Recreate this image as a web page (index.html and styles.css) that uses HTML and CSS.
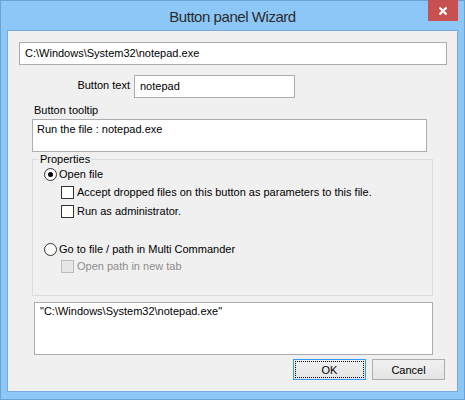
FILE: index.html
```html
<!DOCTYPE html>
<html>
<head>
<meta charset="utf-8">
<link rel="stylesheet" href="styles.css">
</head>
<body>
<div class="window">
  <div class="titlebar">
    <span class="title">Button panel Wizard</span>
    <div class="close">
      <svg width="10" height="10" viewBox="0 0 10 10"><path d="M1.5 1.5 L8.5 8.5 M8.5 1.5 L1.5 8.5" stroke="#fff" stroke-width="2.2" fill="none"/></svg>
    </div>
  </div>
  <div class="client">
    <div class="edit path">C:\Windows\System32\notepad.exe</div>
    <div class="row">
      <span class="lbl-right">Button text</span>
      <div class="edit name">notepad</div>
    </div>
    <div class="tiplbl">Button tooltip</div>
    <div class="edit tip">Run the file : notepad.exe</div>
    <fieldset class="group">
      <legend>Properties</legend>
      <div class="opt r1"><span class="radio checked"></span><span class="rtext">Open file</span></div>
      <div class="opt sub c1"><span class="check"></span><span class="ctext">Accept dropped files on this button as parameters to this file.</span></div>
      <div class="opt sub c2"><span class="check"></span><span class="ctext">Run as administrator.</span></div>
      <div class="opt r2"><span class="radio"></span><span class="rtext">Go to file / path in Multi Commander</span></div>
      <div class="opt sub c3 disabled"><span class="check"></span><span class="ctext">Open path in new tab</span></div>
    </fieldset>
    <div class="edit cmd">"C:\Windows\System32\notepad.exe"</div>
    <div class="buttons">
      <div class="btn default"><span class="focus">OK</span></div>
      <div class="btn"><span class="nofocus">Cancel</span></div>
    </div>
  </div>
</div>
</body>
</html>
```
FILE: styles.css
```css
html, body {
  margin: 0;
  padding: 0;
  background: #ffffff;
}
body {
  font-family: "Liberation Sans", Arial, sans-serif;
  font-size: 11px;
  color: #000;
}
.window {
  position: relative;
  width: 465px;
  height: 400px;
  box-sizing: border-box;
  border: 1px solid #6aa1d9;
  background: #8cc7f8;
  padding: 0 6px 7px 6px;
  display: flex;
  flex-direction: column;
}
.titlebar {
  height: 29px;
  display: flex;
  align-items: center;
  justify-content: center;
  flex: none;
}
.title {
  font-size: 15px;
  letter-spacing: -0.45px;
  color: #2b2b2b;
  line-height: 17px;
  margin-top: 1px;
}
.close {
  position: absolute;
  top: -1px;
  right: 6px;
  width: 30px;
  height: 21px;
  background: #c75050;
  display: flex;
  align-items: center;
  justify-content: center;
}
.client {
  flex: 1;
  border: 1px solid #79aadd;
  background: #f0f0f0;
  display: flex;
  flex-direction: column;
}
.edit {
  box-sizing: border-box;
  background: #fff;
  border: 1px solid #abadb3;
  line-height: 13px;
  white-space: nowrap;
}
.path {
  margin: 11px 10px 0 11px;
  height: 23px;
  padding: 4px 5px;
}
.row {
  display: flex;
  margin-top: 10px;
  align-items: flex-start;
}
.lbl-right {
  width: 122px;
  text-align: right;
  line-height: 13px;
  margin-top: 4px;
}
.name {
  margin-left: 4px;
  width: 161px;
  height: 23px;
  padding: 4px 5px;
}
.tiplbl {
  margin: 6px 0 0 26px;
  line-height: 13px;
}
.tip {
  margin: 2px 0 0 24px;
  width: 395px;
  height: 33px;
  padding: 3px 4px;
}
.group {
  margin: 1px 0 0 24px;
  width: 401px;
  box-sizing: border-box;
  border: 1px solid #dcdcdc;
  padding: 0 0 22px 6px;
  min-width: 0;
}
.group legend {
  padding: 0 1px;
  line-height: 13px;
}
.opt {
  display: flex;
  align-items: center;
  height: 13px;
  line-height: 13px;
  margin-left: 5px;
  white-space: nowrap;
}
.opt.sub {
  margin-left: 22px;
}
.r1 { margin-top: 2px; }
.c1 { margin-top: 5px; }
.c2 { margin-top: 6px; }
.r2 { margin-top: 25px; }
.c3 { margin-top: 4px; }
.radio {
  box-sizing: border-box;
  width: 13px;
  height: 13px;
  border: 1px solid #333;
  border-radius: 50%;
  background: #fff;
  display: flex;
  align-items: center;
  justify-content: center;
  flex: none;
}
.radio.checked::after {
  content: "";
  width: 5px;
  height: 5px;
  border-radius: 50%;
  background: #000;
}
.rtext { margin-left: 2px; }
.check {
  box-sizing: border-box;
  width: 13px;
  height: 13px;
  border: 1px solid #333;
  background: #fff;
  flex: none;
}
.ctext { margin-left: 3px; }
.disabled .check {
  border-color: #bcbcbc;
  background: #e6e6e6;
}
.disabled .ctext {
  color: #8d8d8d;
}
.cmd {
  margin: 6px 0 0 26px;
  width: 399px;
  height: 53px;
  padding: 2px 5px;
}
.buttons {
  display: flex;
  justify-content: flex-end;
  gap: 6px;
  margin: 4px 12px 0 0;
}
.btn {
  box-sizing: border-box;
  width: 73px;
  height: 21px;
  border: 1px solid #acacac;
  background: linear-gradient(#f0f0f0, #e5e5e5);
  padding: 1px;
  display: flex;
}
.btn.default {
  border-color: #3399ff;
}
.focus, .nofocus {
  flex: 1;
  display: flex;
  align-items: center;
  justify-content: center;
  box-sizing: border-box;
  border: 1px dotted transparent;
}
.focus {
  border-color: #000;
}
```
